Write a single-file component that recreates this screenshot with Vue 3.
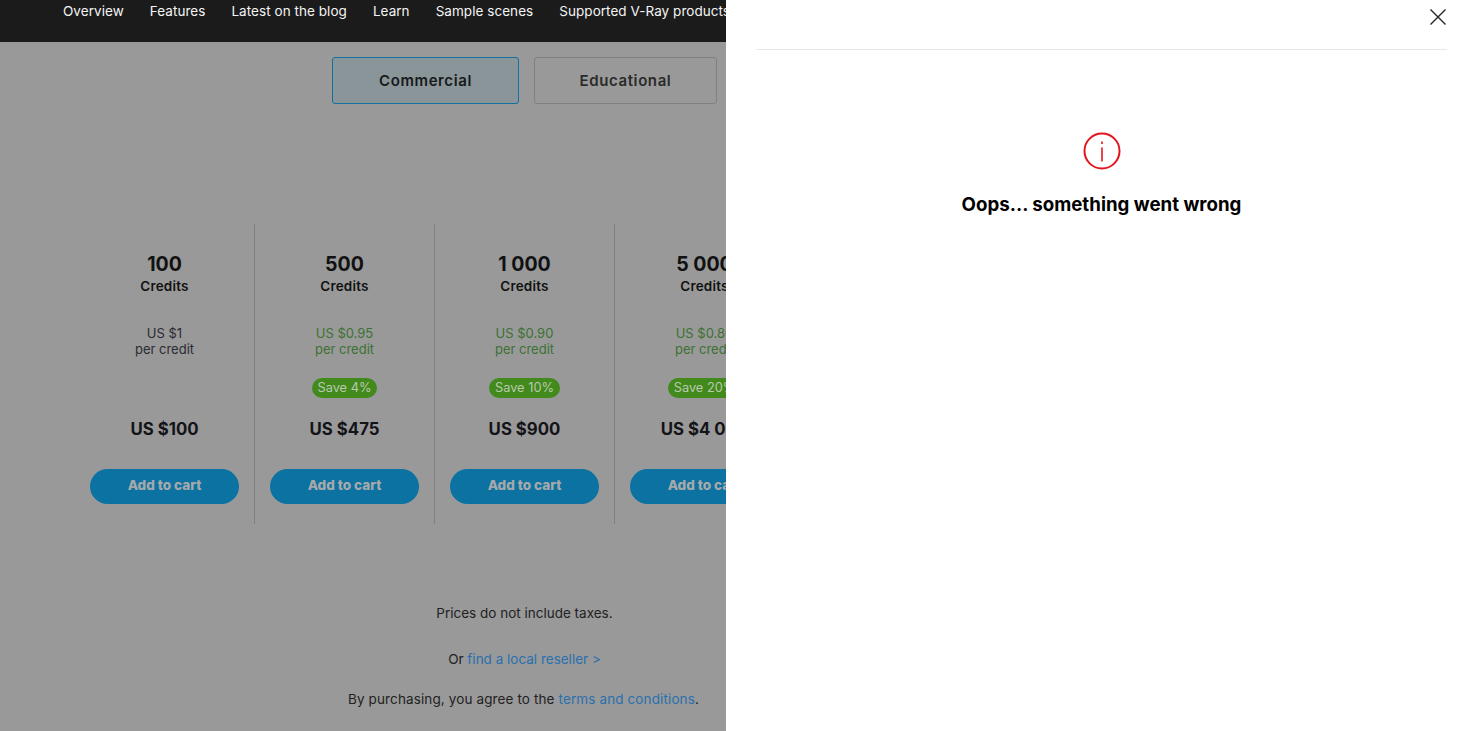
<script setup>
const navItems = ['Overview', 'Features', 'Latest on the blog', 'Learn', 'Sample scenes', 'Supported V-Ray products']
const plans = [
  { credits: '100', unit: 'US $1', total: 'US $100' },
  { credits: '500', unit: 'US $0.95', save: 'Save 4%', total: 'US $475' },
  { credits: '1 000', unit: 'US $0.90', save: 'Save 10%', total: 'US $900' },
  { credits: '5 000', unit: 'US $0.80', save: 'Save 20%', total: 'US $4 000' },
  { credits: '10 000', unit: 'US $0.70', save: 'Save 30%', total: 'US $7 000' }
]
</script>

<template>
  <div class="page">
    <header class="topbar">
      <nav class="nav">
        <a v-for="item in navItems" :key="item" class="nav-item">{{ item }}</a>
      </nav>
    </header>

    <main class="main">
      <div class="tabs">
        <button class="tab tab-active">Commercial</button>
        <button class="tab">Educational</button>
      </div>

      <section class="plans">
        <article v-for="plan in plans" :key="plan.credits" class="plan">
          <div class="credits">{{ plan.credits }}</div>
          <div class="credits-label">Credits</div>
          <div class="unit" :class="{ discounted: plan.save }">
            <div>{{ plan.unit }}</div>
            <div>per credit</div>
          </div>
          <div class="save-slot">
            <span v-if="plan.save" class="save">{{ plan.save }}</span>
          </div>
          <div class="total">{{ plan.total }}</div>
          <button class="add">Add to cart</button>
        </article>
      </section>

      <footer class="notes">
        <p class="note">Prices do not include taxes.</p>
        <p class="note note-reseller">Or <a class="link">find a local reseller &gt;</a></p>
        <p class="note note-terms">By purchasing, you agree to the <a class="link">terms and conditions</a>.</p>
      </footer>
    </main>

    <aside class="drawer">
      <div class="drawer-head">
        <svg class="close" width="18" height="18" viewBox="0 0 18 18" fill="none" stroke="#222" stroke-width="1.4">
          <path d="M1.5 1.5 16.5 16.5M16.5 1.5 1.5 16.5" />
        </svg>
      </div>
      <div class="message">
        <svg class="alert" width="38" height="38" viewBox="0 0 38 38" fill="none" stroke="#e2161f">
          <circle cx="19" cy="19" r="17.5" stroke-width="2" />
          <path d="M19 15.5v14" stroke-width="1.6" />
          <path d="M19 9.5v2.5" stroke-width="1.6" />
        </svg>
        <h2 class="title">Oops... something went wrong</h2>
      </div>
    </aside>
  </div>
</template>

<style>
html, body { margin: 0; overflow: hidden; }
</style>

<style scoped>
.page {
  position: relative;
  width: 1460px;
  height: 731px;
  overflow: hidden;
  background: #999;
  font-family: Inter, "Open Sans", "Liberation Sans", sans-serif;
  color: #1c1c1c;
}
.topbar {
  height: 42px;
  background: #1b1b1b;
  box-sizing: border-box;
  padding-left: 63px;
}
.nav {
  display: flex;
  gap: 26px;
  white-space: nowrap;
}
.nav-item {
  font-size: 13.5px;
  line-height: 23px;
  letter-spacing: 0.05px;
  color: #f4f4f4;
}
.main {
  width: 1049px;
}
.tabs {
  display: flex;
  justify-content: center;
  gap: 15px;
  margin-top: 15px;
}
.tab {
  width: 183px;
  height: 47px;
  box-sizing: border-box;
  background: transparent;
  border: 1px solid #808080;
  border-radius: 3px;
  font: 600 15px Inter, "Liberation Sans", sans-serif;
  letter-spacing: 0.6px;
  color: #2a2a2a;
}
.tab-active {
  width: 187px;
  background: #8a9599;
  border-color: #14709f;
  color: #17191b;
}
.plans {
  display: flex;
  justify-content: center;
  padding-left: 1px;
  margin-top: 120px;
}
.plan {
  width: 180px;
  height: 300px;
  box-sizing: border-box;
  padding-top: 28px;
  display: flex;
  flex-direction: column;
  align-items: center;
  border-right: 1px solid #808080;
}
.plan:last-child { border-right: 0; }
.credits {
  font-size: 19.5px;
  font-weight: 700;
  line-height: 24px;
  color: #111;
}
.credits-label {
  font-size: 13.5px;
  font-weight: 600;
  line-height: 20px;
  letter-spacing: 0.2px;
  color: #111;
}
.unit {
  margin-top: 29px;
  font-size: 13px;
  font-weight: 400;
  line-height: 16px;
  text-align: center;
  color: #2b2b33;
}
.discounted { color: #3c7232; }
.save-slot {
  height: 20px;
  margin-top: 21px;
}
.save {
  display: block;
  height: 20px;
  padding: 0 5.5px;
  border-radius: 10px;
  background: #428a1c;
  color: #b9c9ae;
  font-size: 12.8px;
  line-height: 19px;
}
.total {
  margin-top: 19px;
  font-size: 16.8px;
  font-weight: 700;
  line-height: 25px;
  color: #131318;
}
.add {
  width: 149px;
  height: 35px;
  margin-top: 27px;
  padding: 0 0 3px;
  border: 0;
  border-radius: 18px;
  background: #0b72a1;
  color: #a6a9ab;
  font: 800 13.5px Inter, "Liberation Sans", sans-serif;
}
.notes {
  margin-top: 79px;
  text-align: center;
  font-size: 13.5px;
  line-height: 20px;
  color: #222;
}
.note { margin: 0; }
.note-reseller { margin-top: 26px; }
.note-terms { margin-top: 20px; padding-right: 2px; letter-spacing: 0.12px; }
.link { color: #2a70ad; }
.drawer {
  position: absolute;
  top: 0;
  right: 0;
  width: 734px;
  height: 731px;
  box-sizing: border-box;
  padding: 0 13px 0 30px;
  background: #fff;
}
.drawer-head {
  position: relative;
  height: 50px;
  box-sizing: border-box;
  border-bottom: 1px solid #e8e8e8;
}
.close {
  position: absolute;
  top: 8px;
  right: 0;
}
.message {
  display: flex;
  flex-direction: column;
  align-items: center;
  padding-top: 82px;
}
.alert { display: block; }
.title {
  margin: 21px 0 0;
  font-size: 18.7px;
  font-weight: 700;
  line-height: 28px;
  color: #000;
}
</style>
